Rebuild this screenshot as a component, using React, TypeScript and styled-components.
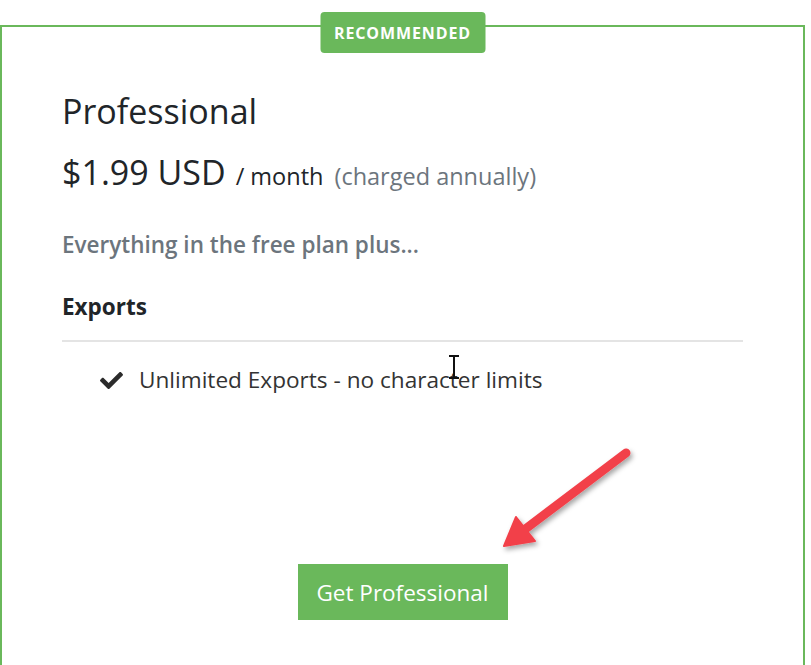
import React from "react";
import styled, { createGlobalStyle } from "styled-components";
import { FaCheck } from "react-icons/fa";

const GlobalStyle = createGlobalStyle`
  body {
    margin: 0;
    background: #fff;
    font-family: "Segoe UI", "Open Sans", "Noto Sans", sans-serif;
    color: #212529;
  }
`;

const Page = styled.div`
  position: relative;
  padding: 25px 6px 0 0;
  height: 640px;
  overflow: hidden;
`;

const Card = styled.div`
  position: relative;
  border: 2px solid #6ab85b;
  border-bottom: none;
  height: 700px;
  padding: 64px 60px 0;
  box-sizing: border-box;
`;

const Badge = styled.div`
  position: absolute;
  top: -15px;
  left: 50%;
  transform: translateX(-50%);
  width: 165px;
  height: 41px;
  display: flex;
  align-items: center;
  justify-content: center;
  background: #6ab85b;
  border-radius: 4px;
  color: #fff;
  font-size: 16px;
  font-weight: 700;
  letter-spacing: 0.9px;
`;

const Title = styled.h2`
  margin: 0;
  font-size: 34px;
  font-weight: 400;
  line-height: 40px;
`;

const PriceRow = styled.div`
  display: flex;
  align-items: baseline;
  margin-top: 21px;
  line-height: 40px;
`;

const Amount = styled.span`
  font-size: 34px;
`;

const Period = styled.span`
  font-size: 23.5px;
  margin-left: 10px;
`;

const Note = styled.span`
  font-size: 23.5px;
  color: #6c757d;
  margin-left: 11px;
`;

const Lead = styled.p`
  margin: 34px 0 0;
  font-size: 22.5px;
  line-height: 30px;
  font-weight: 600;
  color: #6c757d;
`;

const SectionTitle = styled.h4`
  margin: 32px 0 0;
  font-size: 22.5px;
  line-height: 30px;
  font-weight: 700;
  padding-bottom: 18px;
  border-bottom: 2px solid #e4e4e4;
`;

const FeatureList = styled.ul`
  list-style: none;
  margin: 23px 0 0;
  padding: 0 0 0 38px;
`;

const Feature = styled.li`
  display: flex;
  align-items: center;
  gap: 16px;
  font-size: 22.6px;
  line-height: 30px;
  color: #333;
`;

const ButtonRow = styled.div`
  display: flex;
  justify-content: center;
  margin-top: 169px;
`;

const BuyButton = styled.button`
  width: 210px;
  height: 56px;
  border: none;
  background: #6ab85b;
  color: #fff;
  font-family: inherit;
  font-size: 22.5px;
  cursor: pointer;
`;

const Overlay = styled.svg`
  position: absolute;
  left: 0;
  top: 0;
  pointer-events: none;
`;

const App: React.FC = () => {
  return (
    <Page>
      <GlobalStyle />
      <Card>
        <Badge>RECOMMENDED</Badge>
        <Title>Professional</Title>
        <PriceRow>
          <Amount>$1.99 USD</Amount>
          <Period>/ month</Period>
          <Note>(charged annually)</Note>
        </PriceRow>
        <Lead>Everything in the free plan plus...</Lead>
        <SectionTitle>Exports</SectionTitle>
        <FeatureList>
          <Feature>
            <FaCheck size={23} color="#2b2b2b" />
            Unlimited Exports - no character limits
          </Feature>
        </FeatureList>
        <ButtonRow>
          <BuyButton>Get Professional</BuyButton>
        </ButtonRow>
      </Card>
      {/* annotation arrow and text cursor over the card */}
      <Overlay width="811" height="665">
        <defs>
          <filter id="sh" x="-20%" y="-20%" width="140%" height="140%">
            <feDropShadow dx="2" dy="3" stdDeviation="2.5" floodColor="#000" floodOpacity="0.35" />
          </filter>
        </defs>
        <g filter="url(#sh)" fill="#f2414a" stroke="#f2414a">
          <line x1="626" y1="453" x2="524" y2="530" strokeWidth="9" strokeLinecap="round" />
          <polygon points="504,546 516,517 535,541" strokeWidth="2" strokeLinejoin="round" />
        </g>
        <g stroke="#111" strokeWidth="2" fill="none">
          <line x1="454" y1="356" x2="454" y2="378" />
          <line x1="449" y1="356" x2="459" y2="356" />
          <line x1="449" y1="378" x2="459" y2="378" />
        </g>
      </Overlay>
    </Page>
  );
};

export default App;
